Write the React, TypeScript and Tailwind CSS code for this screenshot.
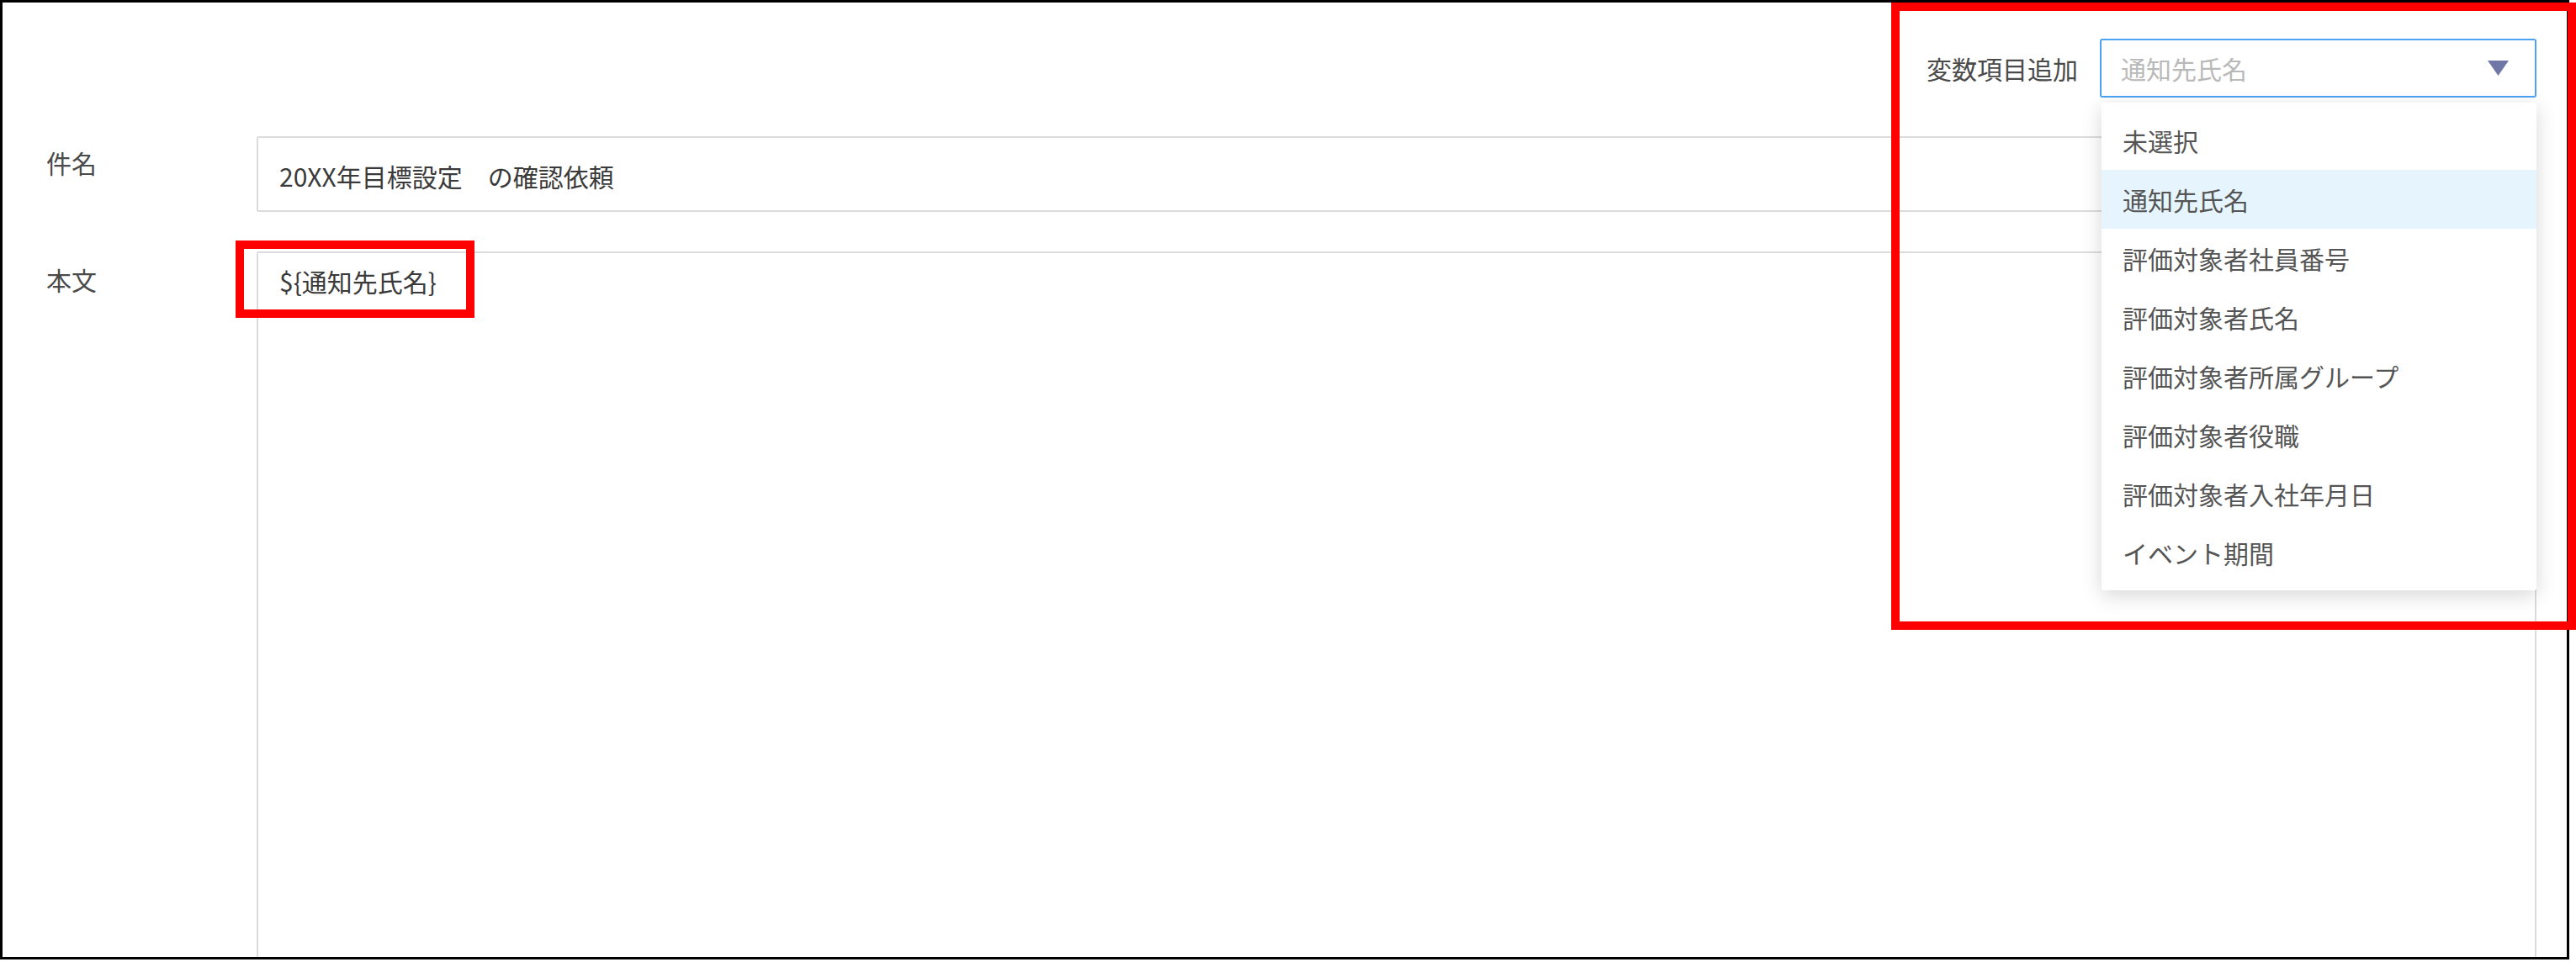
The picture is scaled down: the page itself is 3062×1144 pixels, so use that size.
import React from 'react';

const font = { fontFamily: '"Noto Sans CJK JP", "Noto Sans", sans-serif' };

const options = [
  '未選択',
  '通知先氏名',
  '評価対象者社員番号',
  '評価対象者氏名',
  '評価対象者所属グループ',
  '評価対象者役職',
  '評価対象者入社年月日',
  'イベント期間',
];

function VariableSelect() {
  return (
    <div className="relative w-[519px]">
      <div className="flex h-[70px] items-center justify-between rounded-[3px] border-2 border-[#4da3f3] bg-white pl-[23px] pr-[31px]">
        <span className="text-[30px] leading-none text-[#b9b9b9]">通知先氏名</span>
        <svg width="25" height="18" viewBox="0 0 25 18">
          <polygon points="0,0 25,0 12.5,18" fill="#6f77a6" />
        </svg>
      </div>

      {/* open menu */}
      <div className="absolute left-[2px] top-[76px] z-10 w-[517px] rounded-[3px] bg-white py-[10px] shadow-[0_6px_24px_rgba(0,0,0,0.16)]">
        {options.map((opt, i) => (
          <div
            key={opt}
            className={
              'flex h-[70px] items-center pl-[25px] text-[30px] leading-none text-[#555555] ' +
              (i === 1 ? 'bg-[#e6f5fd]' : '')
            }
          >
            {opt}
          </div>
        ))}
      </div>
    </div>
  );
}

export default function App() {
  return (
    <div className="relative h-[1144px] w-[3062px] overflow-hidden bg-white" style={font}>
      {/* screenshot frame */}
      <div className="h-[1141px] w-[3054px] overflow-hidden border-[3px] border-black bg-white pl-[52px] pr-[36px] pt-[43px]">
        <div className="flex items-center justify-end gap-[26px]">
          <span className="text-[30px] leading-none text-[#4a4a4a]">変数項目追加</span>
          <VariableSelect />
        </div>

        <div className="mt-[46px] flex">
          <div className="w-[250px] shrink-0 pt-[9px] text-[30px] leading-[45px] text-[#4a4a4a]">件名</div>
          <div className="flex h-[90px] flex-1 items-center rounded-[2px] border-2 border-[#dcdcdc] pl-[25px] pt-[4px]">
            <span className="whitespace-pre text-[30px] leading-none text-[#3a3a3a]">20XX年目標設定　の確認依頼</span>
          </div>
        </div>

        <div className="mt-[47px] flex">
          <div className="w-[250px] shrink-0 pt-[11px] text-[30px] leading-[45px] text-[#4a4a4a]">本文</div>
          <div className="h-[900px] flex-1 rounded-[2px] border-2 border-[#dcdcdc] pl-[25px] pt-[11px]">
            <span className="text-[30px] leading-[45px] text-[#3a3a3a]">{'${通知先氏名}'}</span>
          </div>
        </div>
      </div>

      {/* annotation boxes */}
      <div className="pointer-events-none absolute left-[2248px] top-[3px] z-20 h-[746px] w-[814px] border-[10px] border-[#ff0000]" />
      <div className="pointer-events-none absolute left-[280px] top-[286px] z-20 h-[92px] w-[284px] border-[10px] border-[#ff0000]" />
    </div>
  );
}
